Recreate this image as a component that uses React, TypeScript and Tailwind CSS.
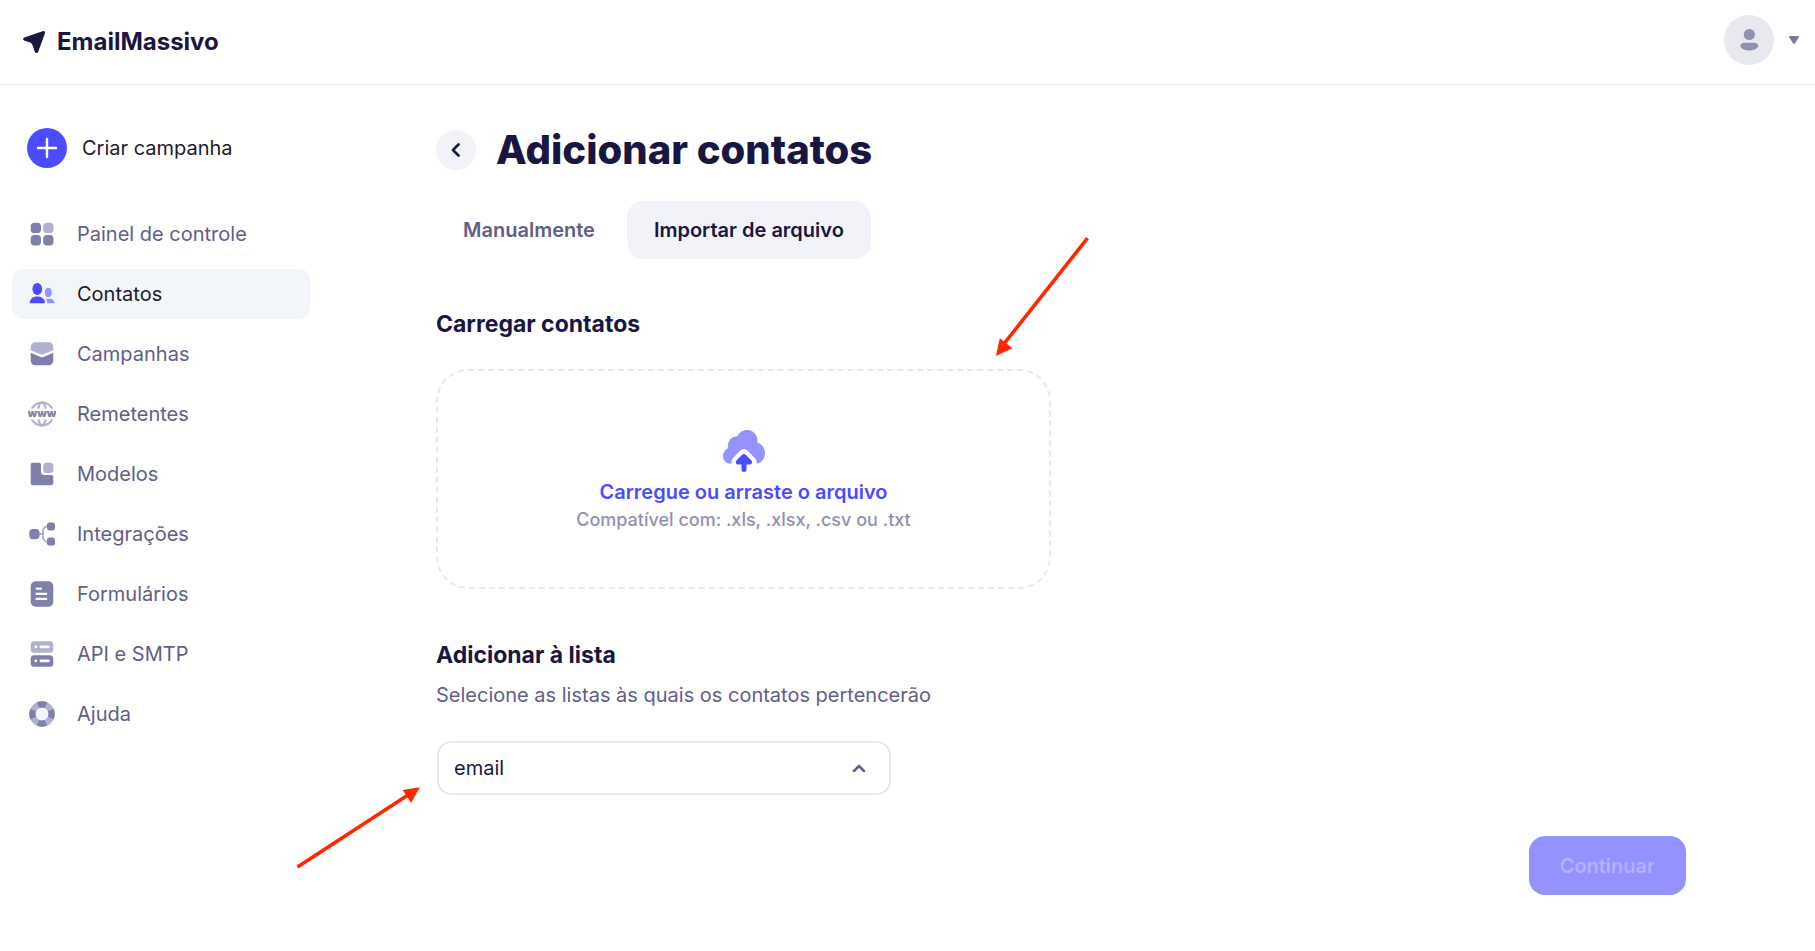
import React from "react";

const DARK = "#7f7fab";
const LIGHT = "#b2b1cd";

function Icon({ children }: { children: React.ReactNode }) {
  return (
    <svg className="size-7 shrink-0" viewBox="0 0 28 28" fill="none" aria-hidden="true">
      {children}
    </svg>
  );
}

const DashboardIcon = () => (
  <Icon>
    <rect x="2.7" y="2.7" width="10.3" height="10.3" rx="3.6" fill={DARK} />
    <rect x="15.2" y="2.7" width="10.3" height="10.3" rx="3.6" fill={LIGHT} />
    <rect x="2.7" y="15.1" width="10.3" height="10.3" rx="3.6" fill={DARK} />
    <rect x="15.2" y="15.1" width="10.3" height="10.3" rx="3.6" fill={DARK} />
  </Icon>
);

const ContactsIcon = () => (
  <Icon>
    <ellipse cx="9.3" cy="9" rx="4.9" ry="6.1" fill="#4b4bff" />
    <path d="M1.7 23.3c0-4.2 3.2-6.7 7.6-6.7s7.7 2.5 7.7 6.7z" fill="#4b4bff" />
    <ellipse cx="20.3" cy="12.4" rx="3.4" ry="4.7" fill="#9492ff" />
    <path d="M18 18.7h3.5c3 0 5 1.8 5.3 4.6h-7.6c0-1.8-.4-3.3-1.2-4.6z" fill="#9492ff" />
  </Icon>
);

const CampaignsIcon = () => (
  <Icon>
    <path d="M2.7 10.2V7.3c0-3 2-5 5-5h12.6c3 0 5 2 5 5v2.9L15.5 14.2q-1.5.6-3 0z" fill={LIGHT} />
    <path d="M2.7 12.7l9.8 4.3q1.5.6 3 0l9.8-4.3v7.6c0 3-2 5-5 5H7.7c-3 0-5-2-5-5z" fill={DARK} />
  </Icon>
);

const SendersIcon = () => (
  <Icon>
    <g stroke={LIGHT} strokeWidth="2.2">
      <path d="M3.8 8.5a11.7 11.7 0 0 1 20.4 0M3.8 19.5a11.7 11.7 0 0 0 20.4 0" />
      <path d="M10.3 8.7c.5-3 1.7-5.7 3.7-6.3 2 .6 3.2 3.3 3.7 6.3M10.3 19.3c.5 3 1.7 5.7 3.7 6.3 2-.6 3.2-3.3 3.7-6.3" />
    </g>
    <text
      x="14"
      y="17"
      textAnchor="middle"
      fontSize="11"
      fontWeight="900"
      fill={DARK}
      fontFamily="Inter, sans-serif"
    >
      www
    </text>
  </Icon>
);

const TemplatesIcon = () => (
  <Icon>
    <path d="M4.7 2.7H11a2 2 0 0 1 2 2V12a3 3 0 0 0 3 3h7.3a2 2 0 0 1 2 2v6.3a2 2 0 0 1-2 2H4.7a2 2 0 0 1-2-2V4.7a2 2 0 0 1 2-2z" fill={DARK} />
    <rect x="15.2" y="2.7" width="10.2" height="10.2" rx="3.2" fill={LIGHT} />
  </Icon>
);

const IntegrationsIcon = () => (
  <Icon>
    <path d="M11 14h4M20 6.3h-.5a4.5 4.5 0 0 0-4.5 4.5v6.4a4.5 4.5 0 0 0 4.5 4.5h.5" stroke={LIGHT} strokeWidth="2" />
    <rect x="1.3" y="9" width="10.2" height="10.2" rx="3.6" fill={DARK} />
    <rect x="19" y="2.4" width="8" height="8" rx="2.6" fill={DARK} />
    <rect x="19" y="17.6" width="8" height="8" rx="2.6" fill={DARK} />
  </Icon>
);

const FormsIcon = () => (
  <Icon>
    <rect x="2.7" y="1.3" width="22.6" height="25.4" rx="5" fill={DARK} />
    <path d="M7.7 8.7h6M7.7 13.8h11.4M7.7 18.9h11.4" stroke="#fff" strokeWidth="2.2" />
  </Icon>
);

const ServerIcon = () => (
  <Icon>
    <rect x="2.7" y="1.3" width="22.6" height="11.5" rx="3.5" fill={LIGHT} />
    <rect x="2.7" y="15.3" width="22.6" height="11.5" rx="3.5" fill={DARK} />
    <g fill="#fff">
      <circle cx="7.8" cy="6.8" r="1.4" />
      <rect x="11.6" y="5.4" width="10" height="2.8" rx="1.3" />
      <circle cx="7.8" cy="20.8" r="1.4" />
      <rect x="11.6" y="19.4" width="10" height="2.8" rx="1.3" />
    </g>
  </Icon>
);

const HelpIcon = () => (
  <Icon>
    <circle cx="14" cy="14" r="6.5" fill="#f4f4f9" />
    <circle cx="14" cy="14" r="9.6" stroke={LIGHT} strokeWidth="6.2" />
    <circle
      cx="14"
      cy="14"
      r="9.6"
      stroke={DARK}
      strokeWidth="6.2"
      pathLength="360"
      strokeDasharray="48 42"
      strokeDashoffset="24"
    />
  </Icon>
);

const navItems = [
  { label: "Painel de controle", icon: DashboardIcon },
  { label: "Contatos", icon: ContactsIcon, active: true },
  { label: "Campanhas", icon: CampaignsIcon },
  { label: "Remetentes", icon: SendersIcon },
  { label: "Modelos", icon: TemplatesIcon },
  { label: "Integrações", icon: IntegrationsIcon },
  { label: "Formulários", icon: FormsIcon },
  { label: "API e SMTP", icon: ServerIcon },
  { label: "Ajuda", icon: HelpIcon },
];

function Header() {
  return (
    <header className="flex h-[85px] items-center justify-between border-b border-[#e9e8ef] pr-4 pl-[23px]">
      <a href="#" className="flex items-center gap-3 text-2xl font-bold text-[#191641]">
        <svg className="size-[22px]" viewBox="0 0 22 22" aria-hidden="true">
          <path
            d="M19.6.2 1.3 6.5c-1.5.6-1.6 2.4-.2 3l6 2.1c1.1.4 1.9 1.2 2.3 2.3l2.5 7c.5 1.5 2.7 1.5 3.2.1L21.9 2.5C22.4.8 21.3-.3 19.6.2z"
            fill="#191641"
          />
        </svg>
        EmailMassivo
      </a>
      <button type="button" aria-label="Conta" className="flex items-center gap-[15px] pb-1">
        <svg className="size-[50px]" viewBox="0 0 50 50" aria-hidden="true">
          <circle cx="25" cy="25" r="25" fill="#e8e8ef" />
          <circle cx="25.3" cy="19.5" r="5.6" fill="#9190b2" />
          <path d="M20.500 27.700h9.600c2.400 0 4.200 1.600 4.200 3.100 0 2.300-4 4.800-9 4.800s-9-2.500-9-4.800c0-1.500 1.800-3.100 4.200-3.100z" fill="#9190b2" />
        </svg>
        <svg className="h-2 w-2.5" viewBox="0 0 10 8" aria-hidden="true">
          <path d="M1 0h8c1 0 1.3.9.7 1.6L6 7.3c-.5.8-1.500.8-2 0L.3 1.6C-.3.9 0 0 1 0z" fill="#7a79a6" />
        </svg>
      </button>
    </header>
  );
}

function Sidebar() {
  return (
    <aside className="w-[310px] shrink-0 pt-[43px] pl-3">
      <a href="#" className="ml-[15px] flex items-center gap-[15px] text-xl text-[#1c1b2b]">
        <svg className="size-10" viewBox="0 0 40 40" fill="none" aria-hidden="true">
          <circle cx="20" cy="20" r="20" fill="#4b4bff" />
          <path d="M20 11v18M11 20h18" stroke="#fff" strokeWidth="2.4" strokeLinecap="round" />
        </svg>
        Criar campanha
      </a>
      <nav className="mt-[41px] flex flex-col gap-2.5">
        {navItems.map(({ label, icon: ItemIcon, active }) => (
          <a
            key={label}
            href="#"
            aria-current={active ? "page" : undefined}
            className={
              active
                ? "flex h-[50px] items-center gap-[21px] rounded-[10px] bg-[#f2f5fa] pl-4 text-xl text-[#1c1b2b]"
                : "flex h-[50px] items-center gap-[21px] rounded-[10px] pl-4 text-xl text-[#615e89]"
            }
          >
            <ItemIcon />
            {label}
          </a>
        ))}
      </nav>
    </aside>
  );
}

function Dropzone() {
  return (
    <div className="relative mt-[31px] max-w-[615px]">
      <label
        htmlFor="arquivo"
        className="flex h-[220px] cursor-pointer flex-col items-center rounded-[32px] border-2 border-dashed border-[#e8e8ef] pt-[59px]"
      >
        <svg className="size-[42px]" viewBox="0 0 42 42" fill="none" aria-hidden="true">
          <path
            d="M8.5 33.7C3.6 34.4 0 30.5 0 26.1c0-3.9 2.1-6.8 5.2-8.2C4 11.5 8.5 6.1 14.5 6.3 16.5 2.2 20.1 0 24 0c5.9 0 10.5 4.7 10.5 10.5 0 .8-.1 1.4-.2 2.1 4.5 1.4 7.7 5.5 7.7 10.5 0 5.5-3.4 9.5-8.3 10.4.2-1.9-.4-4-2-5.6l-6.8-7c-2.3-2.3-5.900-2.3-8.100 0l-6.3 6.7c-1.6 1.7-2.2 4-2 6.1z"
            fill="#9492ff"
          />
          <path
            d="M19.1 24.7c1-1 2.6-1 3.6 0l5.7 5.7c1.5 1.500.4 4-1.6 4h-3.3V40c0 1.200-1.100 2-2.500 2s-2.500-.8-2.500-2v-5.600h-3.400c-2 0-3.100-2.500-1.600-4z"
            fill="#4b4bff"
          />
        </svg>
        <span className="mt-1.5 text-xl leading-7 font-semibold text-[#4b4bff]">Carregue ou arraste o arquivo</span>
        <span className="text-lg leading-7 font-medium text-[#9190b2]">Compatível com: .xls, .xlsx, .csv ou .txt</span>
        <input id="arquivo" type="file" accept=".xls,.xlsx,.csv,.txt" className="sr-only" />
      </label>
      <svg
        className="pointer-events-none absolute -top-[135px] -right-10 h-[124px] w-[97px]"
        viewBox="0 0 97 124"
        aria-hidden="true"
      >
        <path d="M93.5 4.2 9 111" stroke="#ff2600" strokeWidth="3.6" />
        <path d="M2 122 5.8 104.3 18.4 114.3z" fill="#ff2600" />
      </svg>
    </div>
  );
}

function ListPicker() {
  return (
    <div className="relative mt-8 max-w-[455px] pl-px">
      <select
        id="lista"
        aria-describedby="lista-ajuda"
        className="h-[54px] w-full appearance-none rounded-[14px] border-2 border-[#e9e9e9] bg-white px-[15px] text-xl text-[#191641]"
      >
        <option>email</option>
      </select>
      <svg
        className="pointer-events-none absolute top-[23px] right-[25px] h-2 w-3.5"
        viewBox="0 0 14 8"
        fill="none"
        aria-hidden="true"
      >
        <path d="M2 7 7 2l5 5" stroke="#615e89" strokeWidth="2.5" strokeLinecap="round" strokeLinejoin="round" />
      </svg>
      <svg
        className="pointer-events-none absolute top-11 -left-[140px] h-[86px] w-[128px]"
        viewBox="0 0 128 86"
        aria-hidden="true"
      >
        <path d="M1.5 82 112 10" stroke="#ff2600" strokeWidth="3.6" />
        <path d="M124 2.3 106.7 5 115 18z" fill="#ff2600" />
      </svg>
    </div>
  );
}

export default function App() {
  return (
    <div className="min-h-screen bg-white font-['Inter',sans-serif]">
      <Header />
      <div className="flex">
        <Sidebar />
        <main className="min-w-0 flex-1 pt-[41px] pr-[129px] pb-10 pl-[126px]">
          <div className="flex items-center gap-5">
            <button
              type="button"
              aria-label="Voltar"
              className="flex size-10 items-center justify-center rounded-full bg-[#f2f3f9]"
            >
              <svg className="h-3.5 w-2.5" viewBox="0 0 10 14" fill="none" aria-hidden="true">
                <path d="M7.500 1.500 2 7 7.500 12.500" stroke="#191641" strokeWidth="2.6" strokeLinecap="round" strokeLinejoin="round" />
              </svg>
            </button>
            <h1 className="text-[40px] leading-12 font-extrabold text-[#191641]">Adicionar contatos</h1>
          </div>
          <div role="tablist" className="mt-[27px] flex gap-[5px] text-xl font-semibold">
            <button
              type="button"
              role="tab"
              aria-selected="false"
              className="h-[58px] rounded-2xl px-[27px] text-[#615e89]"
            >
              Manualmente
            </button>
            <button
              type="button"
              role="tab"
              aria-selected="true"
              className="h-[58px] rounded-2xl bg-[#f2f3f9] px-[27px] text-[#191641]"
            >
              Importar de arquivo
            </button>
          </div>
          <h2 className="mt-[51px] text-[23px] leading-7 font-bold text-[#191641]">Carregar contatos</h2>
          <Dropzone />
          <h2 className="mt-[52px] text-[23px] leading-7 font-bold text-[#191641]">
            <label htmlFor="lista">Adicionar à lista</label>
          </h2>
          <p id="lista-ajuda" className="mt-3 text-xl leading-7 text-[#615e89]">
            Selecione as listas às quais os contatos pertencerão
          </p>
          <ListPicker />
          <div className="mt-[41px] flex justify-end">
            <button
              type="button"
              disabled
              className="h-[59px] rounded-2xl bg-[#9492ff] px-[31px] text-xl font-semibold text-[#b2b0ff]"
            >
              Continuar
            </button>
          </div>
        </main>
      </div>
    </div>
  );
}
